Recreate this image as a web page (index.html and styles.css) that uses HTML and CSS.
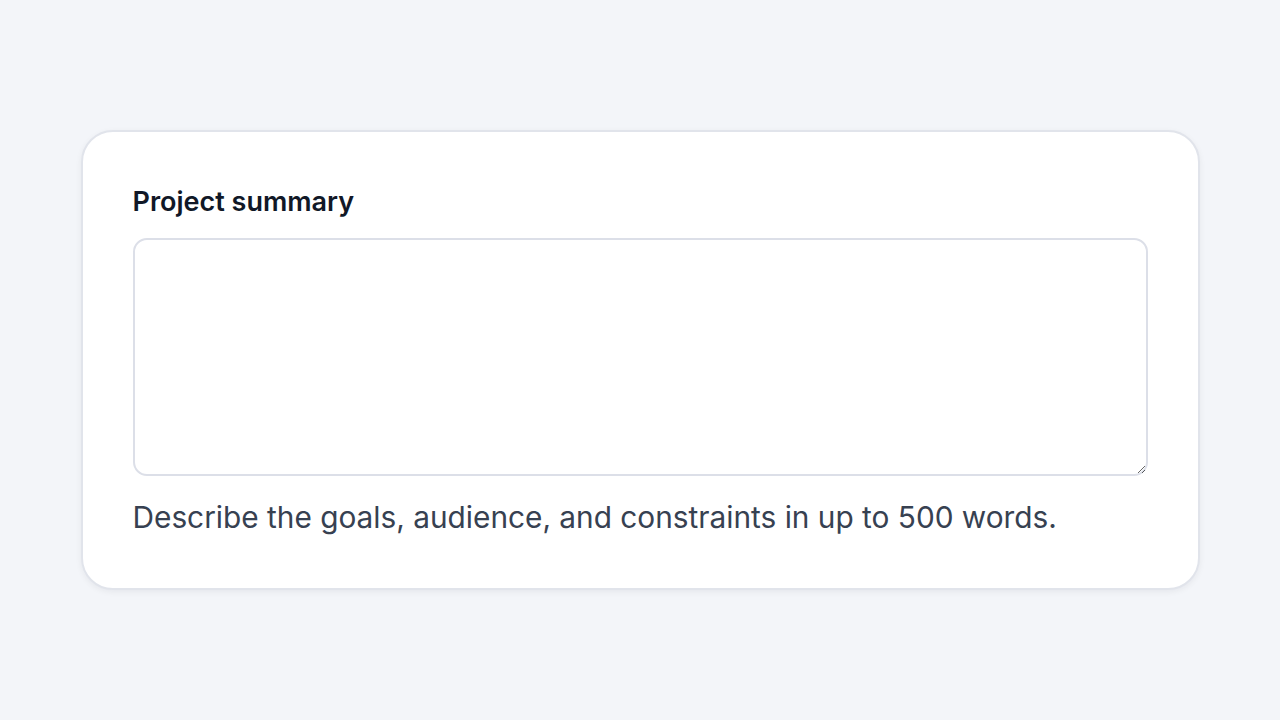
FILE: index.html
```html
<!DOCTYPE html>
<html lang="en">
<head>
    <meta charset="UTF-8">
    <meta name="viewport" content="width=device-width, initial-scale=1.0">
    <title>Project summary</title>
    <link rel="stylesheet" href="styles.css">
</head>
<body>
    <div class="card">
        <label for="summary" class="field-label">Project summary</label>
        <textarea id="summary" name="summary" class="field-input"></textarea>
        <p class="field-help">Describe the goals, audience, and constraints in up to 500 words.</p>
    </div>
</body>
</html>
```

FILE: styles.css
```css
html,
body {
    height: 100%;
}

body {
    margin: 0;
    background-color: #f3f5f9;
    color: #111827;
    font-family: Inter, "Noto Sans", sans-serif;
    display: flex;
    align-items: center;
    justify-content: center;
}

.card {
    box-sizing: border-box;
    width: 1119px;
    padding: 50px 50px 51px;
    background-color: #fff;
    border: 2px solid #e1e4eb;
    border-radius: 32px;
    box-shadow: 0 2px 6px rgba(17, 24, 39, 0.06);
}

.field-label {
    display: block;
    font-size: 27px;
    font-weight: 600;
    line-height: 40px;
    margin-bottom: 16px;
    color: #111827;
}

.field-input {
    display: block;
    box-sizing: border-box;
    width: 100%;
    height: 238px;
    border: 2px solid #dcdfe8;
    border-radius: 14px;
    background-color: #fff;
    resize: vertical;
    font: inherit;
    outline: none;
}

.field-help {
    margin: 21px 0 0;
    font-size: 29.8px;
    line-height: 40px;
    color: #374151;
}
```
